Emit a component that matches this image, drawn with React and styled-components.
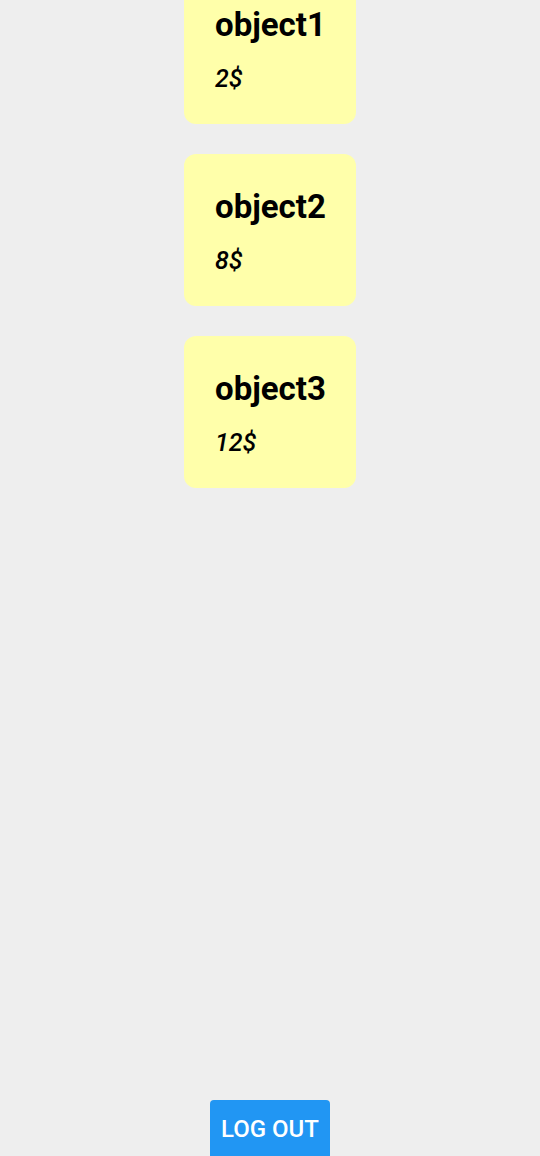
import React from "react";
import styled, { createGlobalStyle } from "styled-components";

const Global = createGlobalStyle`
  html, body { margin: 0; padding: 0; background: #eeeeee; }
  body { font-family: Roboto, "Liberation Sans", sans-serif; }
`;

const Page = styled.div`
  height: 1156px;
  overflow: hidden;
  display: flex;
  flex-direction: column;
  align-items: center;
  background: #eeeeee;
`;

const List = styled.div`
  margin-top: -28px;
  display: flex;
  flex-direction: column;
  gap: 30px;
`;

const Card = styled.div`
  box-sizing: border-box;
  width: 172px;
  height: 152px;
  padding: 33px 0 0 31px;
  background: #ffffaa;
  border-radius: 12px;
  display: flex;
  flex-direction: column;
`;

const Title = styled.div`
  font-size: 33px;
  font-weight: 700;
  color: #000;
  line-height: 39px;
`;

const Price = styled.div`
  margin-top: 20px;
  font-size: 25px;
  font-weight: 500;
  font-style: italic;
  color: #000;
  line-height: 29px;
`;

const Button = styled.button`
  margin-top: auto;
  box-sizing: border-box;
  width: 120px;
  height: 56px;
  flex-shrink: 0;
  border: none;
  border-radius: 4px 4px 0 0;
  background: #2196f3;
  color: #fff;
  font-family: Roboto, "Liberation Sans", sans-serif;
  font-weight: 500;
  font-size: 24px;
  line-height: 28px;
  padding: 15px 0 0;
  display: flex;
  justify-content: center;
  align-items: flex-start;
`;

const items = [
  { name: "object1", price: "2$" },
  { name: "object2", price: "8$" },
  { name: "object3", price: "12$" },
];

export default function App() {
  return (
    <>
      <Global />
      <Page>
        <List>
          {items.map((it) => (
            <Card key={it.name}>
              <Title>{it.name}</Title>
              <Price>{it.price}</Price>
            </Card>
          ))}
        </List>
        <Button>LOG OUT</Button>
      </Page>
    </>
  );
}
